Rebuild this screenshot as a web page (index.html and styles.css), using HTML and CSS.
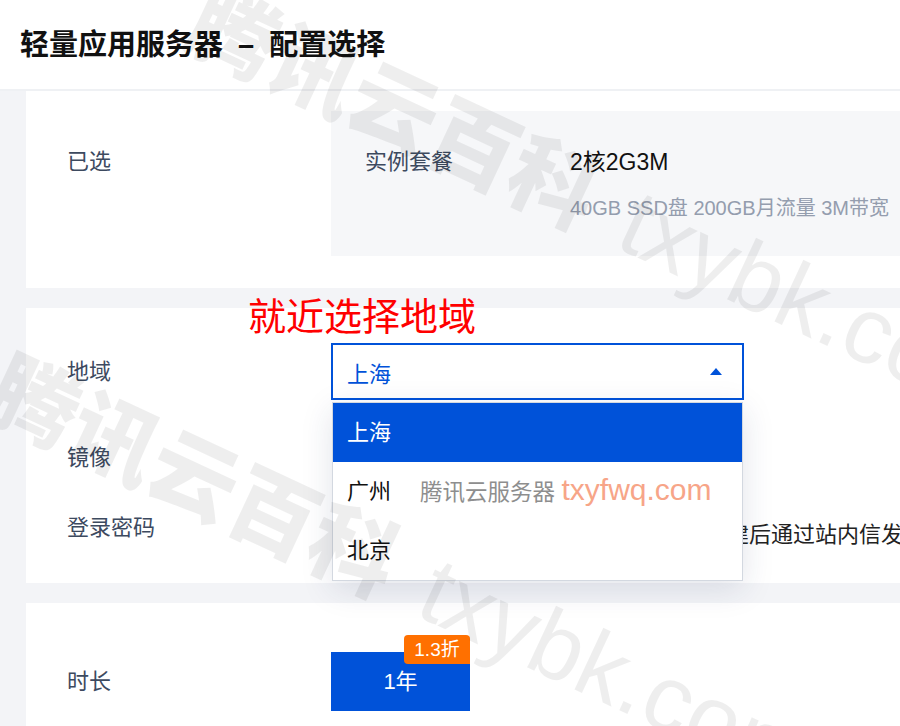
FILE: index.html
```
<!DOCTYPE html>
<html lang="zh-CN">
<head>
<meta charset="utf-8">
<title>轻量应用服务器 - 配置选择</title>
<link rel="stylesheet" href="styles.css">
</head>
<body>
<div class="page">
  <header class="topbar">
    <h1 class="title">轻量应用服务器<span class="dash">–</span>配置选择</h1>
  </header>
  <main class="content">
    <section class="card card-selected">
      <div class="label label-top">已选</div>
      <div class="summary">
        <div class="summary-key">实例套餐</div>
        <div class="summary-val">
          <div class="plan">2核2G3M</div>
          <div class="plan-desc">40GB SSD盘 200GB月流量 3M带宽</div>
        </div>
      </div>
    </section>
    <section class="card card-config">
      <div class="row row-region">
        <div class="label">地域</div>
        <div class="select-wrap">
          <div class="select"><span>上海</span><span class="caret"></span></div>
          <ul class="dropdown">
            <li class="option active">上海</li>
            <li class="option">广州</li>
            <li class="option">北京</li>
          </ul>
          <div class="stamp"><span class="stamp-cn">腾讯云服务器</span> <span class="stamp-en">txyfwq.com</span></div>
        </div>
      </div>
      <div class="row row-image">
        <div class="label">镜像</div>
      </div>
      <div class="row row-pass">
        <div class="label">登录密码</div>
        <div class="value">由系统自动生成密码，密码将在服务器创建后通过站内信发送</div>
      </div>
    </section>
    <section class="card card-duration">
      <div class="row">
        <div class="label">时长</div>
        <div class="opt-wrap">
          <button class="period">1年</button>
          <span class="badge">1.3折</span>
        </div>
      </div>
    </section>
  </main>
  <div class="annotation">就近选择地域</div>
  <div class="watermark wm-a">腾讯云百科<span class="wm-en">txybk.com</span></div>
  <div class="watermark wm-b">腾讯云百科<span class="wm-en">txybk.com</span></div>
</div>
</body>
</html>
```
FILE: styles.css
```
* { box-sizing: border-box; }
html, body { margin: 0; padding: 0; }
body {
  width: 900px;
  height: 726px;
  overflow: hidden;
  background: #f3f4f7;
  font-family: "Liberation Sans", "Noto Sans CJK SC", sans-serif;
}
.page {
  position: relative;
  width: 900px;
  height: 726px;
  overflow: hidden;
}
.topbar {
  height: 91px;
  background: #fff;
  border-bottom: 2px solid #eff1f4;
  padding: 24px 0 0 20px;
}
.title {
  margin: 0;
  font-family: "Noto Sans CJK SC", sans-serif;
  font-size: 29px;
  line-height: 36px;
  font-weight: 700;
  color: #111;
  white-space: nowrap;
}
.dash {
  display: inline-block;
  margin: 0 15px;
  font-family: "Liberation Sans", sans-serif;
}
.content {
  padding-left: 26px;
  display: flex;
  flex-direction: column;
  gap: 20px;
}
.card { background: #fff; }
.card-selected {
  display: flex;
  padding: 20px 0 32px 41px;
}
.label {
  width: 264px;
  flex: none;
  font-size: 22px;
  color: #3d4a5f;
}
.label-top { padding-top: 37px; line-height: 28px; }
.summary {
  flex: 1;
  background: #f6f7f9;
  height: 145px;
  display: flex;
  padding: 37px 0 0 34px;
}
.summary-key {
  width: 205px;
  flex: none;
  font-size: 22px;
  line-height: 28px;
  color: #3d4a5f;
}
.plan { font-size: 23px; line-height: 28px; color: #111; }
.plan-desc {
  margin-top: 19px;
  font-size: 20px;
  line-height: 26px;
  color: #949dae;
  white-space: nowrap;
}
.card-config {
  display: flex;
  flex-direction: column;
  padding: 35px 0 26px 41px;
}
.row { display: flex; align-items: flex-start; }
.row-region .label { line-height: 57px; }
.row-image { margin-top: 29px; height: 58px; }
.row-pass { margin-top: 12px; height: 58px; }
.row-image .label, .row-pass .label { line-height: 58px; }
.value {
  margin-top: 7px;
  line-height: 58px;
  font-size: 22px;
  color: #222;
  white-space: nowrap;
}
.select-wrap { position: relative; width: 413px; flex: none; }
.select {
  height: 57px;
  border: 2px solid #0052d9;
  background: #fff;
  display: flex;
  align-items: center;
  justify-content: space-between;
  padding: 0 20px 0 14px;
  color: #0052d9;
  font-size: 22px;
}
.caret {
  width: 0;
  height: 0;
  border-left: 6px solid transparent;
  border-right: 6px solid transparent;
  border-bottom: 7px solid #0052d9;
}
.dropdown {
  position: absolute;
  top: 59px;
  left: 1px;
  width: 411px;
  margin: 0;
  padding: 0;
  list-style: none;
  background: #fff;
  border: 1px solid #d3d8e0;
  box-shadow: 0 8px 30px rgba(30, 50, 90, 0.13);
  z-index: 3;
}
.option {
  height: 59px;
  line-height: 59px;
  padding-left: 14px;
  font-size: 22px;
  color: #111;
}
.option.active { background: #0052d9; color: #fff; }
.stamp {
  position: absolute;
  left: 89px;
  top: 129px;
  z-index: 4;
  white-space: nowrap;
  line-height: 36px;
}
.stamp-cn { font-size: 22.5px; color: #8e8e8e; }
.stamp-en { font-size: 30px; color: #f7a588; margin-left: 2px; }
.card-duration {
  padding: 49px 0 0 41px;
  height: 200px;
}
.card-duration .label { line-height: 59px; }
.opt-wrap { position: relative; }
.period {
  display: block;
  width: 139px;
  height: 59px;
  padding: 0;
  border: 0;
  background: #0052d9;
  color: #fff;
  font-family: inherit;
  font-size: 22px;
  line-height: 55px;
}
.badge {
  position: absolute;
  right: 0;
  top: -17px;
  width: 66px;
  height: 29px;
  border-radius: 4px 4px 0 4px;
  background: #ff7000;
  color: #fff;
  font-size: 19px;
  line-height: 29px;
  text-align: center;
}
.annotation {
  position: absolute;
  left: 248px;
  top: 292px;
  font-family: "Noto Sans CJK SC", sans-serif;
  font-size: 38px;
  line-height: 44px;
  color: #ff0000;
  z-index: 5;
}
.watermark {
  position: absolute;
  font-family: "Noto Sans CJK SC", sans-serif;
  font-weight: 900;
  font-size: 88px;
  line-height: 88px;
  color: rgba(0, 0, 0, 0.065);
  transform: rotate(25deg);
  transform-origin: 0 50%;
  white-space: nowrap;
  pointer-events: none;
  z-index: 10;
}
.wm-en {
  font-family: "Liberation Sans", sans-serif;
  font-weight: 400;
  font-size: 94px;
  margin-left: 36px;
}
.wm-a { left: 196px; top: -34px; }
.wm-b { left: -4px; top: 334px; }
```
